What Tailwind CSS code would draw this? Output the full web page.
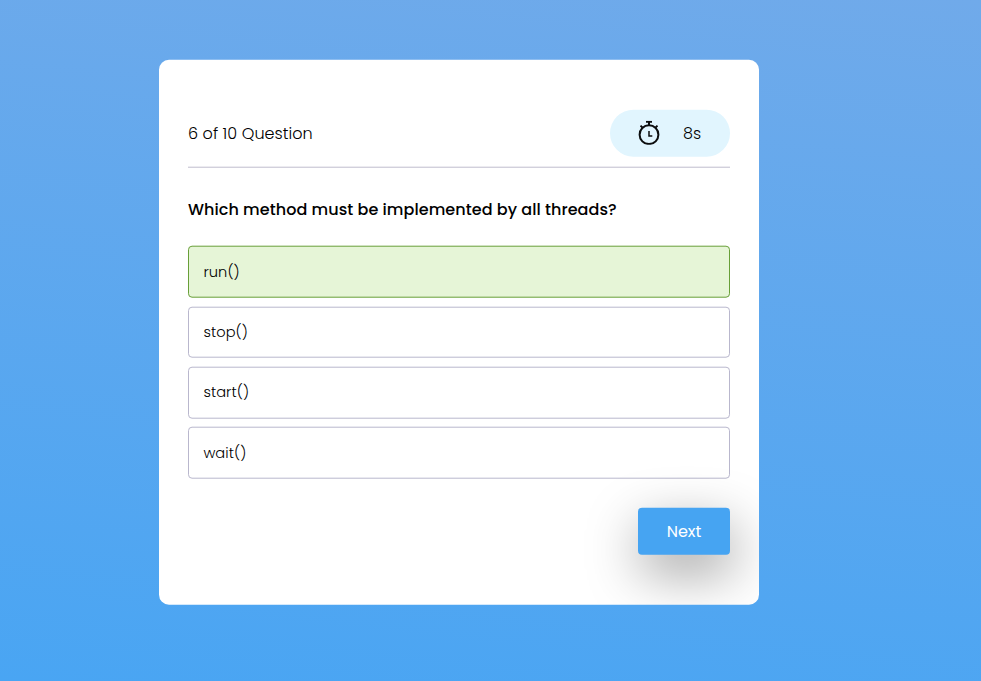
<!DOCTYPE html>
<html lang="en">
<head>
<meta charset="utf-8">
<title>Quiz</title>
<script src="https://cdn.jsdelivr.net/npm/@tailwindcss/browser@4"></script>
</head>
<body class="h-screen overflow-hidden bg-[linear-gradient(6deg,#49a5f3_0%,#70aaea_100%)] pt-[60px] pl-[159px] font-['Poppins','Inter',sans-serif] text-black">
<main class="flex h-[545px] w-[600px] flex-col overflow-hidden rounded-[10px] bg-white px-[29px] pt-[50px] [transform:translateY(-0.3px)]">
  <header class="flex h-[58px] items-start justify-between border-b border-[#bfbdcd]">
    <p class="pt-[12px] text-base leading-6 font-light tracking-[0.06px]">6 of 10 Question</p>
    <div class="flex h-[47px] w-[120px] items-center rounded-full bg-[#e1f5fe] pl-[27px]">
      <svg class="mb-px h-6 w-6" viewBox="0 0 24 24" fill="none" stroke="#0b0d0e" stroke-width="2">
        <circle cx="12" cy="14" r="9.4"/>
        <path d="M9 1.1h6M12 1v4M3.5 4.9l2.3 2.3M20.5 4.9l-2.3 2.3"/>
        <path stroke-width="1.5" d="M12 10.3v5h3.3"/>
      </svg>
      <p class="pt-px pl-[22px] text-base leading-6 font-light">8s</p>
    </div>
  </header>
  <h1 class="mt-[30px] text-base leading-6 font-medium tracking-[0.06px] whitespace-nowrap">Which method must be implemented by all threads?</h1>
  <div class="mt-[24px] flex flex-col text-[14.6px] leading-[21px] font-light tracking-[0.08px]">
    <button class="mb-[9px] flex h-[52px] items-center rounded-[4px] border border-[#689f38] bg-[#e6f5d7] px-[14.4px] pt-px"><span>run()</span></button>
    <button class="mb-[9px] flex h-[51px] items-center rounded-[4px] border border-[#b9b7cd] px-[14.4px]"><span>stop()</span></button>
    <button class="mb-[8px] flex h-[52px] items-center rounded-[4px] border border-[#b9b7cd] px-[14.4px] pb-px"><span>start()</span></button>
    <button class="flex h-[52px] items-center rounded-[4px] border border-[#b9b7cd] px-[14.4px] pt-px"><span>wait()</span></button>
  </div>
  <button class="mt-[29px] flex h-[47px] w-[92px] items-center justify-center self-end rounded-[4px] bg-[#46a4f2] pt-px text-base text-white shadow-[3px_18px_54px_rgba(0,0,0,0.38)]">Next</button>
</main>
</body>
</html>
